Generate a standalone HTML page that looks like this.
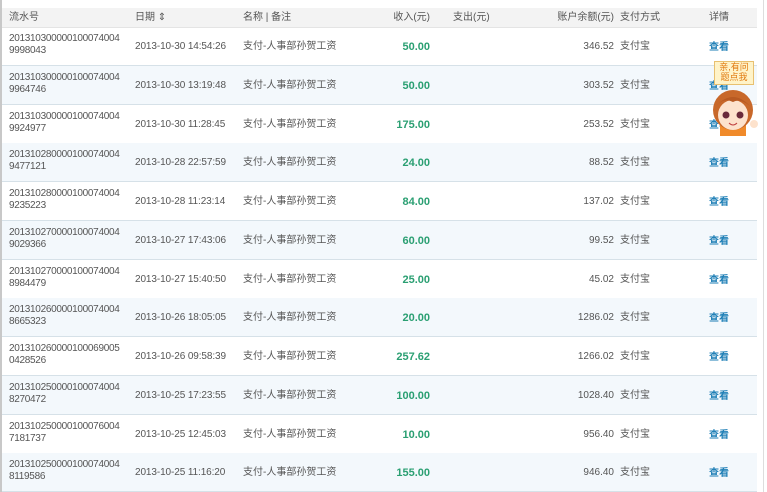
<!DOCTYPE html>
<html><head><meta charset="utf-8"><style>
body{margin:0;width:767px;height:492px;overflow:hidden;background:#fff;font-family:"Liberation Sans","Noto Sans CJK SC",sans-serif;font-size:10px;color:#555;position:relative}
.lb{position:absolute;left:0;top:0;width:2px;height:492px;background:#c8c8c8}
.rb{position:absolute;left:763px;top:0;width:1px;height:492px;background:#ddd}
.hd{position:absolute;left:2px;top:8px;width:755px;height:19px;background:#f3f3f3;border-bottom:1px solid #e4e4e4}
.row{position:absolute;left:2px;width:755px;height:38px;border-bottom:1px solid #d6e1e8}
.row.alt{background:#f3f8fc}
.c{position:absolute;white-space:nowrap;line-height:13px}
.id{left:7px;top:6px;line-height:12px;letter-spacing:-0.3px}
.dt{left:133px;top:13px;letter-spacing:-0.1px}
.nm{left:241px;top:13px}
.in{right:327px;top:14px;color:#2a9f72;font-weight:bold;font-size:11px}
.bl{right:143px;top:13px}
.pm{left:618px;top:13px}
.lk{left:707px;top:14px;color:#1b7db5;font-weight:bold}
.h{top:3px}
</style></head><body>
<div class="lb"></div><div class="rb"></div>
<div class="hd">
<span class="c h" style="left:7px">流水号</span>
<span class="c h" style="left:133px">日期 ⇕</span>
<span class="c h" style="left:241px">名称 | 备注</span>
<span class="c h" style="right:327px">收入(元)</span>
<span class="c h" style="left:451px">支出(元)</span>
<span class="c h" style="right:143px">账户余额(元)</span>
<span class="c h" style="left:618px">支付方式</span>
<span class="c h" style="left:707px">详情</span>
</div>
<div class="row" style="top:27px"><span class="c id">201310300000100074004<br>9998043</span><span class="c dt">2013-10-30 14:54:26</span><span class="c nm">支付-人事部孙贺工资</span><span class="c in">50.00</span><span class="c bl">346.52</span><span class="c pm">支付宝</span><span class="c lk">查看</span></div>
<div class="row alt" style="top:66px"><span class="c id">201310300000100074004<br>9964746</span><span class="c dt">2013-10-30 13:19:48</span><span class="c nm">支付-人事部孙贺工资</span><span class="c in">50.00</span><span class="c bl">303.52</span><span class="c pm">支付宝</span><span class="c lk">查看</span></div>
<div class="row" style="top:105px"><span class="c id">201310300000100074004<br>9924977</span><span class="c dt">2013-10-30 11:28:45</span><span class="c nm">支付-人事部孙贺工资</span><span class="c in">175.00</span><span class="c bl">253.52</span><span class="c pm">支付宝</span><span class="c lk">查看</span></div>
<div class="row alt" style="top:143px"><span class="c id">201310280000100074004<br>9477121</span><span class="c dt">2013-10-28 22:57:59</span><span class="c nm">支付-人事部孙贺工资</span><span class="c in">24.00</span><span class="c bl">88.52</span><span class="c pm">支付宝</span><span class="c lk">查看</span></div>
<div class="row" style="top:182px"><span class="c id">201310280000100074004<br>9235223</span><span class="c dt">2013-10-28 11:23:14</span><span class="c nm">支付-人事部孙贺工资</span><span class="c in">84.00</span><span class="c bl">137.02</span><span class="c pm">支付宝</span><span class="c lk">查看</span></div>
<div class="row alt" style="top:221px"><span class="c id">201310270000100074004<br>9029366</span><span class="c dt">2013-10-27 17:43:06</span><span class="c nm">支付-人事部孙贺工资</span><span class="c in">60.00</span><span class="c bl">99.52</span><span class="c pm">支付宝</span><span class="c lk">查看</span></div>
<div class="row" style="top:260px"><span class="c id">201310270000100074004<br>8984479</span><span class="c dt">2013-10-27 15:40:50</span><span class="c nm">支付-人事部孙贺工资</span><span class="c in">25.00</span><span class="c bl">45.02</span><span class="c pm">支付宝</span><span class="c lk">查看</span></div>
<div class="row alt" style="top:298px"><span class="c id">201310260000100074004<br>8665323</span><span class="c dt">2013-10-26 18:05:05</span><span class="c nm">支付-人事部孙贺工资</span><span class="c in">20.00</span><span class="c bl">1286.02</span><span class="c pm">支付宝</span><span class="c lk">查看</span></div>
<div class="row" style="top:337px"><span class="c id">201310260000100069005<br>0428526</span><span class="c dt">2013-10-26 09:58:39</span><span class="c nm">支付-人事部孙贺工资</span><span class="c in">257.62</span><span class="c bl">1266.02</span><span class="c pm">支付宝</span><span class="c lk">查看</span></div>
<div class="row alt" style="top:376px"><span class="c id">201310250000100074004<br>8270472</span><span class="c dt">2013-10-25 17:23:55</span><span class="c nm">支付-人事部孙贺工资</span><span class="c in">100.00</span><span class="c bl">1028.40</span><span class="c pm">支付宝</span><span class="c lk">查看</span></div>
<div class="row" style="top:415px"><span class="c id">201310250000100076004<br>7181737</span><span class="c dt">2013-10-25 12:45:03</span><span class="c nm">支付-人事部孙贺工资</span><span class="c in">10.00</span><span class="c bl">956.40</span><span class="c pm">支付宝</span><span class="c lk">查看</span></div>
<div class="row alt" style="top:453px"><span class="c id">201310250000100074004<br>8119586</span><span class="c dt">2013-10-25 11:16:20</span><span class="c nm">支付-人事部孙贺工资</span><span class="c in">155.00</span><span class="c bl">946.40</span><span class="c pm">支付宝</span><span class="c lk">查看</span></div>
<div style="position:absolute;left:714px;top:61px;width:38px;height:22px;background:#fff3c8;border:1px solid #e8c070;color:#e07a10;font-size:9px;line-height:10px;text-align:center">亲,有问<br>题点我</div>
<svg style="position:absolute;left:710px;top:88px" width="50" height="48" viewBox="0 0 50 48">
<rect x="10" y="36" width="26" height="12" fill="#f08a2a"/>
<circle cx="23" cy="22" r="20" fill="#c8682a"/>
<ellipse cx="23" cy="27" rx="15" ry="15" fill="#fde2cc"/>
<path d="M6 18 Q23 0 40 18 Q30 10 23 14 Q14 9 6 18Z" fill="#b85a22"/>
<circle cx="16" cy="27" r="3.5" fill="#6a2a3a"/><circle cx="30" cy="27" r="3.5" fill="#6a2a3a"/>
<path d="M19 35 Q23 39 27 35" stroke="#c04040" fill="none"/>
<circle cx="44" cy="36" r="4" fill="#fde2cc"/>
</svg>
</body></html>
